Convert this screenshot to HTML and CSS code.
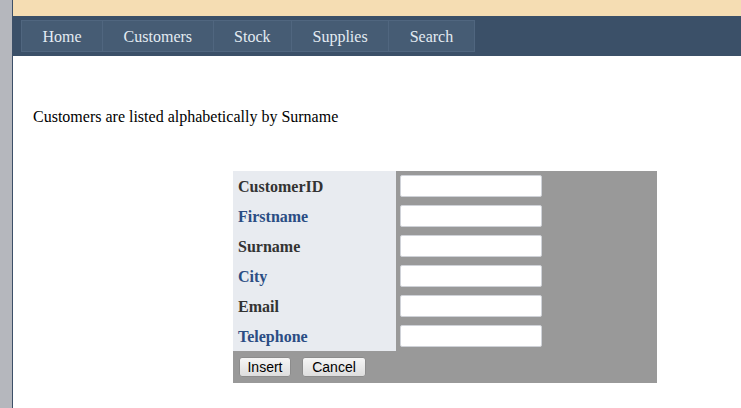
FILE: index.html
```html
<!DOCTYPE html>
<html>
<head>
<meta charset="utf-8">
<link rel="stylesheet" href="styles.css">
</head>
<body>
<div class="side"></div>
<div class="main">
  <div class="topbar"></div>
  <nav class="nav">
    <a class="nav-item" href="#">Home</a>
    <a class="nav-item" href="#">Customers</a>
    <a class="nav-item" href="#">Stock</a>
    <a class="nav-item" href="#">Supplies</a>
    <a class="nav-item" href="#">Search</a>
  </nav>
  <p class="intro">Customers are listed alphabetically by Surname</p>
  <table class="form-table">
    <tr><th class="lbl dark">CustomerID</th><td class="fld"><input class="inp" type="text"></td></tr>
    <tr><th class="lbl blue">Firstname</th><td class="fld"><input class="inp" type="text"></td></tr>
    <tr><th class="lbl dark">Surname</th><td class="fld"><input class="inp" type="text"></td></tr>
    <tr><th class="lbl blue">City</th><td class="fld"><input class="inp" type="text"></td></tr>
    <tr><th class="lbl dark">Email</th><td class="fld"><input class="inp" type="text"></td></tr>
    <tr><th class="lbl blue">Telephone</th><td class="fld"><input class="inp" type="text"></td></tr>
    <tr><td class="btns" colspan="2"><button class="btn btn-insert">Insert</button><button class="btn btn-cancel">Cancel</button></td></tr>
  </table>
</div>
</body>
</html>
```
FILE: styles.css
```css
html, body {
  margin: 0;
  padding: 0;
  height: 100%;
}
body {
  display: flex;
  font-family: "Liberation Serif", "Times New Roman", serif;
  font-size: 16px;
  background: #ffffff;
  color: #000;
}
.side {
  width: 12px;
  flex: none;
  background: #b5b7bd;
  border-right: 1px solid #3d5068;
}
.main {
  flex: 1;
  min-width: 0;
}
.topbar {
  height: 16px;
  background: #f5ddb3;
}
.nav {
  height: 40px;
  box-sizing: border-box;
  background: #3b5068;
  padding: 4px 8px;
  display: flex;
}
.nav-item {
  display: block;
  height: 32px;
  box-sizing: border-box;
  line-height: 30px;
  padding: 1px 20.5px 0;
  background: #465c74;
  border: 1px solid #50667f;
  border-left-width: 0;
  color: #e3ebf2;
  text-decoration: none;
}
.nav-item:first-child {
  border-left-width: 1px;
}
.intro {
  margin: 52px 0 0 20px;
  line-height: 18px;
}
.form-table {
  margin: 45px 0 0 220px;
  border-collapse: collapse;
  background: #999999;
  width: 424px;
}
.lbl {
  width: 163px;
  height: 30px;
  box-sizing: border-box;
  padding: 2px 0 0 5px;
  background: #e8ebf0;
  text-align: left;
  font-weight: bold;
  font-size: 16px;
  vertical-align: middle;
}
.dark { color: #333333; }
.blue { color: #2b4d84; }
.fld {
  padding: 0 0 0 4px;
  height: 30px;
  vertical-align: middle;
}
.inp {
  display: block;
  width: 142px;
  height: 22px;
  box-sizing: border-box;
  border: 1px solid #cfd2d8;
  border-radius: 2px;
  background: #fff;
  margin: 0;
  padding: 0;
}
.btns {
  height: 32px;
  padding: 0 0 0 6px;
  vertical-align: middle;
}
.btn {
  height: 20px;
  box-sizing: border-box;
  font-family: "Liberation Sans", Arial, sans-serif;
  font-size: 14px;
  color: #000;
  border: 1px solid #8c8c8c;
  border-radius: 3px;
  background: linear-gradient(#f6f6f6, #dddddd);
  padding: 0;
  margin: 0;
  vertical-align: middle;
}
.btn-insert { width: 52px; }
.btn-cancel { width: 64px; margin-left: 11px; }
```
